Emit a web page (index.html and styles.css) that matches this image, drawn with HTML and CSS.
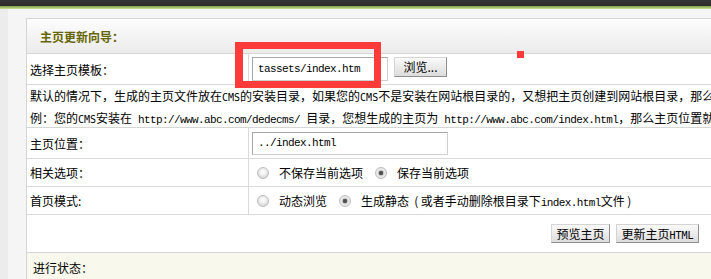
FILE: index.html
```html
<!DOCTYPE html>
<html lang="zh-CN">
<head>
<meta charset="utf-8">
<title>主页更新向导</title>
<link rel="stylesheet" href="styles.css">
</head>
<body>
<div class="topbar"></div>
<div class="page">
  <div class="form">
    <div class="head">主页更新向导：</div>

    <div class="lbl row-a">选择主页模板：</div>
    <div class="val row-a">
      <input class="txt w1" type="text" value="tassets/index.htm">
      <button class="btn browse" type="button">浏览...</button>
    </div>

    <div class="note">默认的情况下，生成的主页文件放在<span class="sm">CMS</span>的安装目录，如果您的<span class="sm">CMS</span>不是安装在网站根目录的，又想把主页创建到网站根目录，那么<br>例：您的<span class="sm">CMS</span>安装在<span class="en"> http://www.abc.com/dedecms/ </span>目录，您想生成的主页为<span class="en"> http://www.abc.com/index.html</span>，那么主页位置就</div>

    <div class="lbl row-a">主页位置：</div>
    <div class="val row-a">
      <input class="txt w2" type="text" value="../index.html">
    </div>

    <div class="lbl row-b">相关选项：</div>
    <div class="val row-b">
      <input class="radio" type="radio" name="keep">
      <span class="opt">不保存当前选项</span>
      <input class="radio" type="radio" name="keep" checked>
      <span class="opt">保存当前选项</span>
    </div>

    <div class="lbl row-b">首页模式:</div>
    <div class="val row-b">
      <input class="radio" type="radio" name="mode">
      <span class="opt">动态浏览</span>
      <input class="radio" type="radio" name="mode" checked>
      <span class="opt">生成静态 <span class="paren">(</span>或者手动删除根目录下<span class="en">index.html</span>文件<span class="paren">)</span></span>
    </div>

    <div class="actions">
      <button class="btn b1" type="button">预览主页</button>
      <button class="btn b2" type="button">更新主页<span class="sm">HTML</span></button>
    </div>

    <div class="status">进行状态：</div>
  </div>
</div>
<div class="mark-box"></div>
<div class="mark-dot"></div>
</body>
</html>
```

FILE: styles.css
```css
html, body {
  margin: 0;
  padding: 0;
}
body {
  width: 711px;
  height: 279px;
  overflow: hidden;
  position: relative;
  font-family: "Noto Sans CJK SC", "Noto Sans", sans-serif;
  font-size: 12px;
  color: #000;
  background: #f4f4f4;
}
.topbar {
  height: 9px;
  background: linear-gradient(#343434 0, #2a2a2a 6px, #7d9a46 6px, #c9e191 9px);
}
.page {
  padding: 9px 0 0 26px;
  background: linear-gradient(to right, #ececec 0, #ececec 8px, #f5f5f5 8px);
  height: 270px;
  box-sizing: border-box;
}
.form {
  width: 720px;
  display: grid;
  grid-template-columns: 222px 1fr;
  border: 1px solid #d6d6d6;
  border-bottom: none;
  background: #fff;
}
.head {
  grid-column: 1 / -1;
  height: 35px;
  box-sizing: border-box;
  border-bottom: 1px solid #d6d6d6;
  background: linear-gradient(#fdfdfd, #ebebeb);
  padding-left: 13px;
  display: flex;
  align-items: center;
  font-weight: bold;
  color: #666600;
}
.lbl, .val {
  box-sizing: border-box;
  border-bottom: 1px solid #dadada;
  display: flex;
  align-items: center;
}
.lbl {
  border-right: 1px solid #dadada;
  padding-left: 3px;
}
.val {
  padding-left: 3px;
  white-space: nowrap;
}
.row-a { height: 31px; }
.row-b { height: 28px; }
.row-b.val { padding-left: 8px; }
.note {
  grid-column: 1 / -1;
  height: 43px;
  box-sizing: border-box;
  border-bottom: 1px solid #d6d6d6;
  padding: 1px 0 0 3px;
  line-height: 20px;
  white-space: nowrap;
}
.en {
  font-family: "Liberation Mono", monospace;
  font-size: 11px;
  letter-spacing: -0.6px;
  white-space: pre;
}
.sm {
  font-family: "DejaVu Sans Mono", monospace;
  font-size: 10px;
}
.paren {
  display: inline-block;
  width: 9px;
  text-align: center;
}
.txt {
  box-sizing: border-box;
  height: 24px;
  margin: 0;
  padding: 0 0 0 5px;
  border: 1px solid #a8a8a8;
  border-right-color: #cfcfcf;
  border-bottom-color: #cfcfcf;
  font-family: "Liberation Mono", monospace;
  font-size: 11px;
  letter-spacing: -0.6px;
  color: #000;
  background: #fff;
  outline: none;
}
.w1 { width: 136px; }
.w2 { width: 196px; height: 23px; }
.btn {
  box-sizing: border-box;
  height: 20px;
  margin: 0;
  padding: 0;
  border: 1px solid #d4d4d4;
  border-right-color: #8f8f8f;
  border-bottom-color: #8f8f8f;
  background: linear-gradient(#fafafa, #dcdcdc);
  font-family: "Noto Sans CJK SC", "Noto Sans", sans-serif;
  font-size: 12px;
  color: #000;
  line-height: 18px;
  border-radius: 0;
}
.browse {
  width: 53px;
  margin-left: 6px;
  margin-top: -4px;
}
.radio {
  -webkit-appearance: none;
  appearance: none;
  box-sizing: border-box;
  width: 12px;
  height: 12px;
  margin: 0;
  border: 1px solid #bdbdbd;
  border-radius: 50%;
  background: radial-gradient(circle at 50% 40%, #ffffff 0, #f0f0f0 3px, #d6d6d6 6px);
}
.radio:checked {
  background: radial-gradient(circle, #4a4a4a 0, #5a5a5a 2px, #cfcfcf 2.6px, #eeeeee 4px, #d8d8d8 6px);
}
.opt {
  margin-left: 10px;
  margin-right: 12px;
}
.actions {
  grid-column: 1 / -1;
  height: 38px;
  box-sizing: border-box;
  border-bottom: 1px solid #d6d6d6;
  display: flex;
  justify-content: flex-end;
  align-items: center;
  gap: 6px;
  padding: 0 48px 1px 0;
}
.b1 { width: 59px; height: 19px; }
.b2 { width: 83px; height: 19px; }
.status {
  grid-column: 1 / -1;
  height: 26px;
  background: #f8f9ec;
  padding: 6px 0 0 6px;
  box-sizing: border-box;
}
.mark-box {
  position: absolute;
  left: 235px;
  top: 42px;
  width: 146px;
  height: 46px;
  box-sizing: border-box;
  border: 7px solid #fe3b3b;
  border-left-width: 8px;
}
.mark-dot {
  position: absolute;
  left: 517px;
  top: 51px;
  width: 7px;
  height: 7px;
  background: #fe3b3b;
}
```
